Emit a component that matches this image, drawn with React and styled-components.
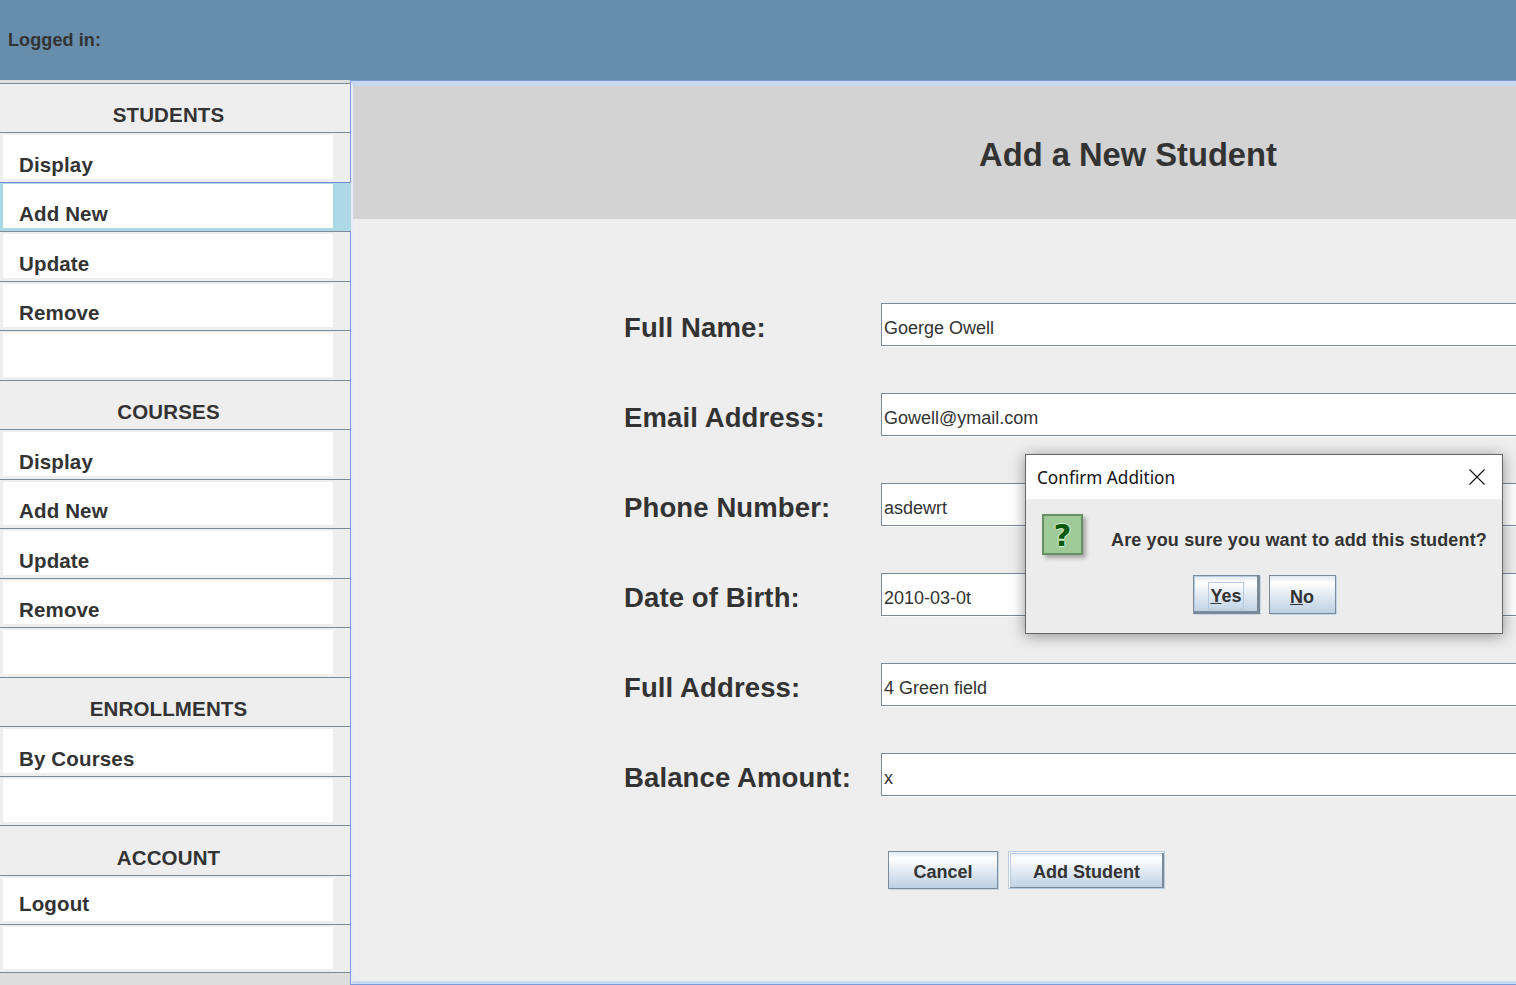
import React from "react";
import styled, { createGlobalStyle } from "styled-components";

const GlobalStyle = createGlobalStyle`
  html, body {
    margin: 0;
    padding: 0;
    height: 100%;
    overflow: hidden;
    background: #eeeeee;
  }
  * {
    box-sizing: border-box;
  }
`;

const Page = styled.div`
  position: relative;
  width: 1516px;
  height: 985px;
  overflow: hidden;
  display: flex;
  flex-direction: column;
  font-family: "Liberation Sans", Arial, sans-serif;
  color: #333333;
`;

const TopBar = styled.header`
  height: 80px;
  flex: none;
  display: flex;
  align-items: center;
  padding-left: 8px;
  background: #678dac;
  font-size: 18px;
  font-weight: bold;
  letter-spacing: 0.1px;
`;

const Workspace = styled.div`
  flex: 1;
  display: flex;
  min-height: 0;
`;

const Sidebar = styled.nav`
  width: 351px;
  flex: none;
  display: flex;
  flex-direction: column;
  background: #dddddd;
  border-right: 1px solid #7b9bd6;
`;

const SidebarTop = styled.div`
  height: 3.5px;
  flex: none;
  border-bottom: 1px solid #7b8a99;
`;

const Heading = styled.div`
  height: 49.5px;
  flex: none;
  display: flex;
  align-items: flex-end;
  justify-content: center;
  padding: 0 13px 5px 0;
  background: #eeeeee;
  border-bottom: 1px solid #7b8a99;
  font-size: 20.5px;
  line-height: 24px;
  font-weight: bold;
  letter-spacing: 0.15px;
`;

const Row = styled.div`
  height: ${({ $last }) => ($last ? "48px" : "49.5px")};
  flex: none;
  display: flex;
  padding: ${({ $active }) => ($active ? "1px 20px 3px 3px" : "2px 17px 3px 3px")};
  background: ${({ $active }) => ($active ? "#add8e6" : "#eeeeee")};
  margin-right: ${({ $active }) => ($active ? "-3px" : "0")};
  border-bottom: 1px solid ${({ $rule }) => $rule || "#7b8a99"};
`;

const RowLabel = styled.div`
  flex: 1;
  display: flex;
  align-items: flex-end;
  padding: 0 0 ${({ $raised }) => ($raised ? "5px" : "2px")} 16px;
  background: #ffffff;
  font-size: 20.5px;
  line-height: 24px;
  font-weight: bold;
  letter-spacing: 0.15px;
`;

const Main = styled.main`
  flex: 1;
  min-width: 0;
  border-top: 1px solid #7b9bd6;
  border-bottom: 1px solid #7b9bd6;
`;

const Pane = styled.div`
  height: 100%;
  background: #eeeeee;
  border-top: 5px solid #c8daf0;
  border-bottom: 3px solid #c8daf0;
  border-left: 2px solid #e6edf7;
`;

const TitleBand = styled.div`
  height: 133px;
  display: flex;
  align-items: center;
  justify-content: center;
  padding: 5px 0 0 387px;
  background: #d3d3d3;
  font-size: 32.7px;
  font-weight: bold;
`;

const Form = styled.form`
  display: grid;
  grid-template-columns: 257px 1fr;
  grid-auto-rows: 42px;
  row-gap: 48px;
  align-items: center;
  padding: 84px 0 0 271px;
`;

const FieldLabel = styled.label`
  padding-top: 8px;
  font-size: 27.5px;
  font-weight: bold;
  letter-spacing: 0.12px;
`;

const Field = styled.input`
  width: 100%;
  height: 43px;
  padding: 8px 0 0 2px;
  background: #ffffff;
  border: 1px solid #7b8a99;
  border-right: none;
  outline: none;
  box-shadow: 0 1px 0 #ffffff;
  font-family: inherit;
  font-size: 18px;
  color: #333333;
`;

const FormActions = styled.div`
  display: flex;
  gap: 10px;
  margin: 56px 0 0 535px;
`;

const buttonEdge = {
  plain: "border: 1px solid #7b8a99; box-shadow: 1px 1px 0 #c5d6e8;",
  primary:
    "border: 1px solid #b7cce2; box-shadow: inset 1px 1px 0 #ffffff, inset -2px -1px 0 #7b8a99, inset 2px 2px 0 #b7cce2;",
  focused:
    "border: 1px solid #7b8a99; box-shadow: inset -2px -2px 0 #7b8a99, inset 1px 1px 0 #b7cce2, 1px 1px 0 #c5d6e8;",
};

const Button = styled.button`
  width: ${({ $width }) => $width}px;
  height: ${({ $height }) => $height || 38}px;
  padding: ${({ $height }) => ($height ? "5px" : "4px")} 0 0;
  display: flex;
  align-items: center;
  justify-content: center;
  ${({ $edge }) => buttonEdge[$edge || "plain"]}
  background: linear-gradient(#dfe8f2 0%, #ffffff 18%, #e3ebf4 50%, #bdd0e4 100%);
  font-family: inherit;
  font-size: 18px;
  font-weight: bold;
  color: #333333;
`;

const Dialog = styled.div`
  position: absolute;
  left: 1025px;
  top: 454px;
  width: 478px;
  height: 180px;
  display: flex;
  flex-direction: column;
  background: #ececec;
  border: 1px solid #666666;
  box-shadow: 0 2px 14px rgba(0, 0, 0, 0.4);
`;

const DialogTitle = styled.div`
  height: 44px;
  flex: none;
  display: flex;
  align-items: center;
  justify-content: space-between;
  padding: 0 17px 0 11px;
  background: #ffffff;
  font-family: "Noto Sans", sans-serif;
  font-size: 17.2px;
  color: #111111;
`;

const DialogBody = styled.div`
  display: flex;
  align-items: flex-start;
  gap: 28px;
  padding: 15px 0 0 16px;
`;

const QuestionIcon = styled.div`
  width: 41px;
  height: 41px;
  flex: none;
  display: flex;
  align-items: center;
  justify-content: center;
  background: #9fcb98;
  border: 2px solid #678f68;
  box-shadow: 3px 3px 4px rgba(0, 0, 0, 0.3);
  font-family: "DejaVu Sans", sans-serif;
  font-size: 31px;
  font-weight: bold;
  color: #0b5a0b;
  text-shadow: 1px 0 0 #d6f0d2, -1px 0 0 #d6f0d2, 0 -1px 0 #d6f0d2, 0 1px 0 #d6f0d2;
`;

const Message = styled.div`
  padding-top: 16px;
  font-size: 18px;
  line-height: 21px;
  font-weight: bold;
  letter-spacing: 0.14px;
  white-space: nowrap;
`;

const DialogActions = styled.div`
  display: flex;
  justify-content: center;
  gap: 9px;
  margin-top: 20px;
`;

const FocusRing = styled.span`
  padding: 3px 0 2px;
  width: 36px;
  margin-top: -3px;
  text-align: center;
  border: 1px solid #b8c8e0;
`;

const questions = [
  ["Full Name:", "Goerge Owell"],
  ["Email Address:", "Gowell@ymail.com"],
  ["Phone Number:", "asdewrt"],
  ["Date of Birth:", "2010-03-0t"],
  ["Full Address:", "4 Green field"],
  ["Balance Amount:", "x"],
];

const menu = [
  { title: "STUDENTS", items: ["Display", "Add New", "Update", "Remove", ""] },
  { title: "COURSES", items: ["Display", "Add New", "Update", "Remove", ""] },
  { title: "ENROLLMENTS", items: ["By Courses", ""] },
  { title: "ACCOUNT", items: ["Logout", ""] },
];

const App = () => {
  return (
    <Page>
      <GlobalStyle />
      <TopBar>Logged in:</TopBar>
      <Workspace>
        <Sidebar>
          <SidebarTop />
          {menu.map((group, g) => (
            <React.Fragment key={group.title}>
              <Heading>{group.title}</Heading>
              {group.items.map((item, i) => {
                const students = g === 0;
                return (
                  <Row
                    key={i}
                    $active={students && i === 1}
                    $rule={students && i === 0 ? "#6f8ad0" : undefined}
                    $last={g === 3 && i === 1}
                  >
                    <RowLabel $raised={item === "Logout"}>{item}</RowLabel>
                  </Row>
                );
              })}
            </React.Fragment>
          ))}
        </Sidebar>
        <Main>
          <Pane>
            <TitleBand>Add a New Student</TitleBand>
            <Form>
              {questions.map(([label, value]) => (
                <React.Fragment key={label}>
                  <FieldLabel>{label}</FieldLabel>
                  <Field readOnly defaultValue={value} />
                </React.Fragment>
              ))}
            </Form>
            <FormActions>
              <Button type="button" $width={110}>Cancel</Button>
              <Button type="button" $width={157} $edge="primary">Add Student</Button>
            </FormActions>
          </Pane>
        </Main>
      </Workspace>
      <Dialog>
        <DialogTitle>
          Confirm Addition
          <svg width="16" height="16" viewBox="0 0 16 16" fill="none" stroke="#111111" strokeWidth="1.1">
            <path d="M0.5 0.5 L15.5 15.5 M15.5 0.5 L0.5 15.5" />
          </svg>
        </DialogTitle>
        <DialogBody>
          <QuestionIcon>?</QuestionIcon>
          <Message>Are you sure you want to add this student?</Message>
        </DialogBody>
        <DialogActions>
          <Button type="button" $width={67} $height={39} $edge="focused">
            <FocusRing><u>Y</u>es</FocusRing>
          </Button>
          <Button type="button" $width={67} $height={39}>
            <span><u>N</u>o</span>
          </Button>
        </DialogActions>
      </Dialog>
    </Page>
  );
};

export default App;
